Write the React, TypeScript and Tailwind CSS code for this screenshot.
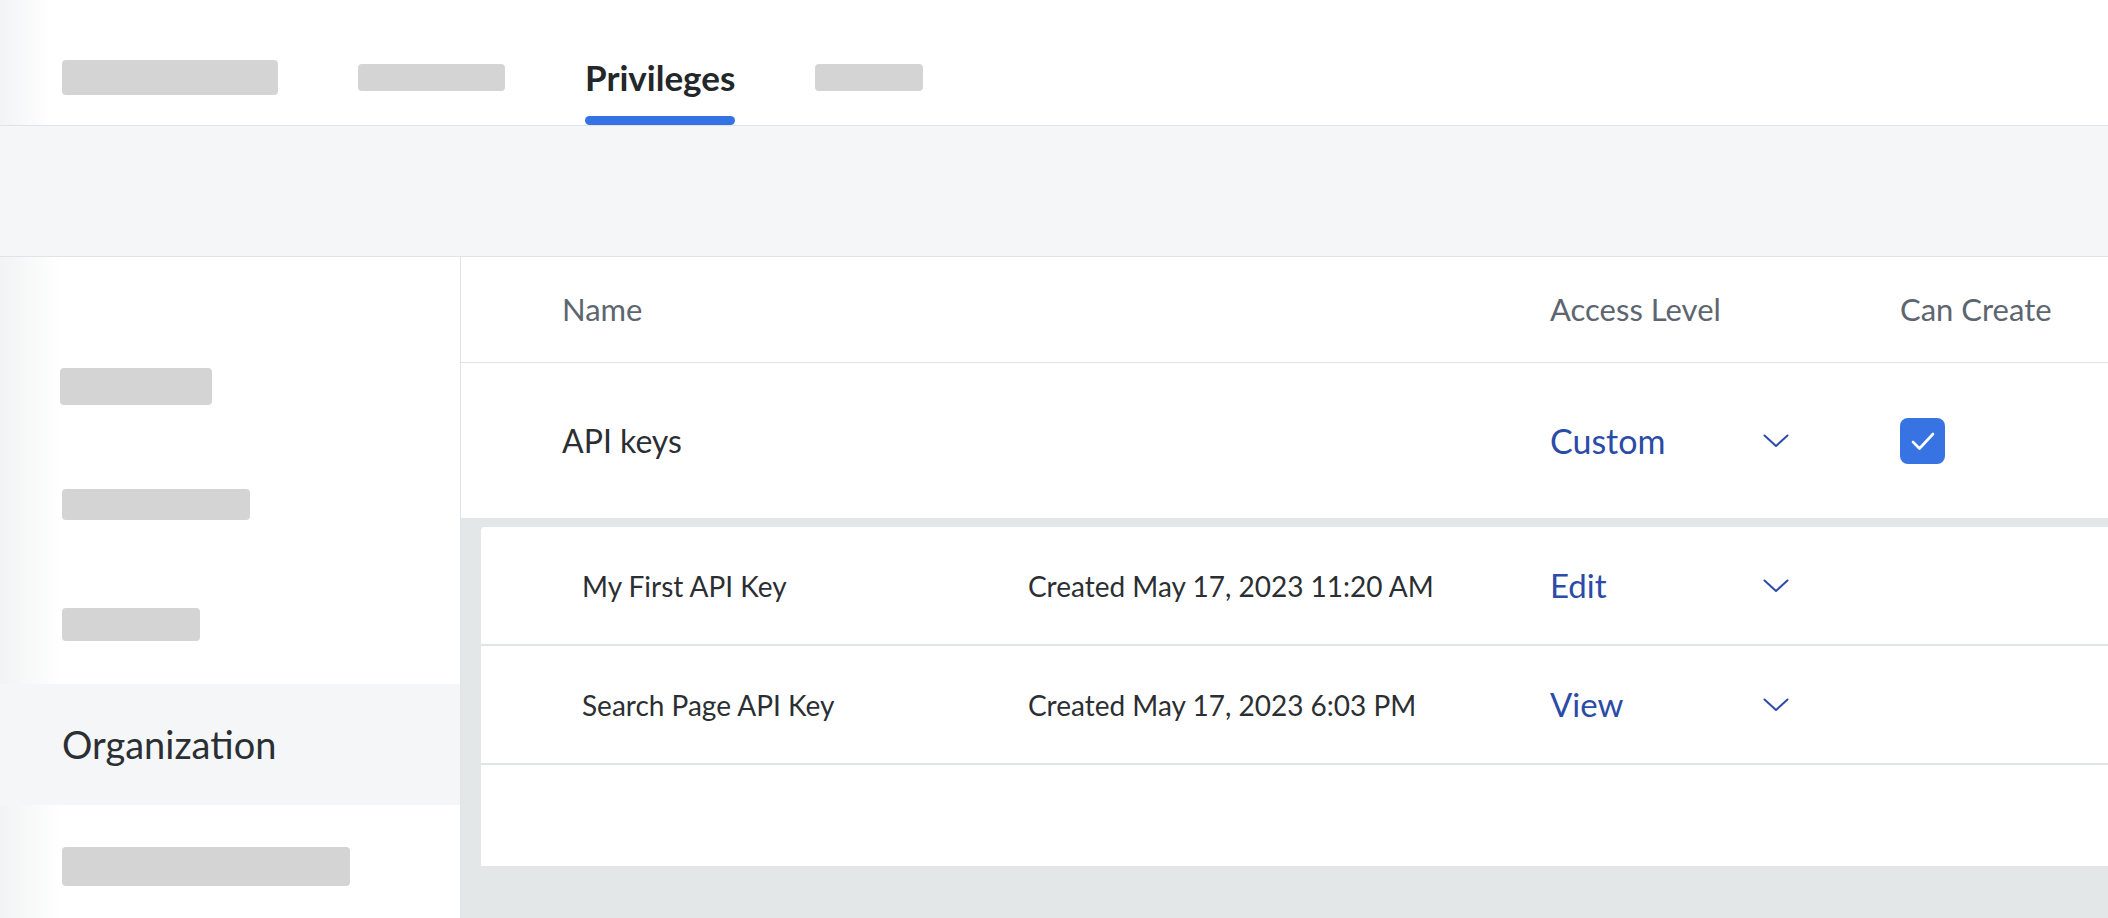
import React from "react";

const font = { fontFamily: "Lato, 'Noto Sans', sans-serif" };

function Chevron() {
  return (
    <svg width="26" height="14" viewBox="0 0 26 14" fill="none">
      <polyline
        points="1.5,1.5 13,12 24.5,1.5"
        stroke="#2a4ba8"
        strokeWidth="2"
        strokeLinecap="round"
        strokeLinejoin="round"
      />
    </svg>
  );
}

function Checkbox() {
  return (
    <div className="w-[45px] h-[46px] rounded-[8px] bg-[#3873e4] flex items-center justify-center">
      <svg width="26" height="22" viewBox="0 0 26 22" fill="none">
        <polyline
          points="3,12 9.5,18.5 23,4"
          stroke="white"
          strokeWidth="2.6"
          strokeLinecap="round"
          strokeLinejoin="round"
        />
      </svg>
    </div>
  );
}

function AccessCell({ label, size }: { label: string; size: string }) {
  return (
    <div className={`w-[239px] flex items-center justify-between text-[#2a4ba8] ${size}`}>
      <span>{label}</span>
      <Chevron />
    </div>
  );
}

function Tab({ children, active }: { children: React.ReactNode; active?: boolean }) {
  return (
    <div className="flex flex-col">
      <div className="h-[116px] pt-[38px] flex items-center">{children}</div>
      <div className={`h-[9px] rounded-full ${active ? "bg-[#3572e3]" : "bg-transparent"}`} />
    </div>
  );
}

const Bar = ({ w, h }: { w: string; h: string }) => (
  <div className={`${w} ${h} rounded-[4px] bg-[#d4d4d4]`} />
);

const keys = [
  { name: "My First API Key", created: "Created May 17, 2023 11:20 AM", level: "Edit" },
  { name: "Search Page API Key", created: "Created May 17, 2023 6:03 PM", level: "View" },
];

export default function App() {
  return (
    <div className="w-full h-[918px] overflow-hidden bg-white flex flex-col" style={font}>
      <div className="h-[126px] shrink-0 border-b border-[#e1e4e6] bg-[linear-gradient(to_right,#f2f3f4,#ffffff_50px)] flex gap-20 pl-[62px]">
        <Tab>
          <Bar w="w-[216px]" h="h-[35px]" />
        </Tab>
        <Tab>
          <Bar w="w-[147px]" h="h-[27px]" />
        </Tab>
        <Tab active>
          <span className="text-[35px] font-bold text-[#24272a] leading-none">Privileges</span>
        </Tab>
        <Tab>
          <Bar w="w-[108px]" h="h-[27px]" />
        </Tab>
      </div>

      <div className="h-[131px] shrink-0 bg-[#f5f6f8] border-b border-[#e1e4e6]" />

      <div className="flex flex-1 min-h-0">
        <div className="w-[461px] shrink-0 border-r border-[#e1e4e6] bg-[linear-gradient(to_right,#f2f3f4,#ffffff_60px)] pt-[70px] flex flex-col">
          <div className="h-[118px] shrink-0 flex items-center pl-[60px]">
            <Bar w="w-[152px]" h="h-[37px]" />
          </div>
          <div className="h-[119px] shrink-0 flex items-center pl-[62px]">
            <Bar w="w-[188px]" h="h-[31px]" />
          </div>
          <div className="h-[120px] shrink-0 flex items-center pl-[62px]">
            <Bar w="w-[138px]" h="h-[33px]" />
          </div>
          <div className="h-[121px] shrink-0 flex items-center pl-[62px] bg-[#f5f6f8] text-[38px] text-[#2b2f33]">
            Organization
          </div>
          <div className="h-[122px] shrink-0 flex items-center pl-[62px]">
            <Bar w="w-[288px]" h="h-[39px]" />
          </div>
        </div>

        <div className="flex-1 flex flex-col bg-[#e4e7e8]">
          <div className="bg-white">
            <div className="h-[106px] border-b border-[#e1e4e6] grid grid-cols-[988px_350px_1fr] items-center pl-[101px] text-[31px] text-[#5d6670]">
              <span>Name</span>
              <span>Access Level</span>
              <span>Can Create</span>
            </div>
            <div className="h-[155px] grid grid-cols-[988px_350px_1fr] items-center pl-[101px] text-[32px] text-[#2b2f33]">
              <span>API keys</span>
              <AccessCell label="Custom" size="text-[34px]" />
              <Checkbox />
            </div>
          </div>

          <div className="mt-[9px] ml-[20px] bg-white rounded-tl-[4px] flex flex-col">
            {keys.map((k) => (
              <div
                key={k.name}
                className="h-[119px] border-b-[2px] border-[#e1e4e6] grid grid-cols-[446px_522px_1fr] items-center pl-[101px] text-[28px] text-[#2b2f33]"
              >
                <span>{k.name}</span>
                <span>{k.created}</span>
                <AccessCell label={k.level} size="text-[33px]" />
              </div>
            ))}
            <div className="h-[101px]" />
          </div>
        </div>
      </div>
    </div>
  );
}
